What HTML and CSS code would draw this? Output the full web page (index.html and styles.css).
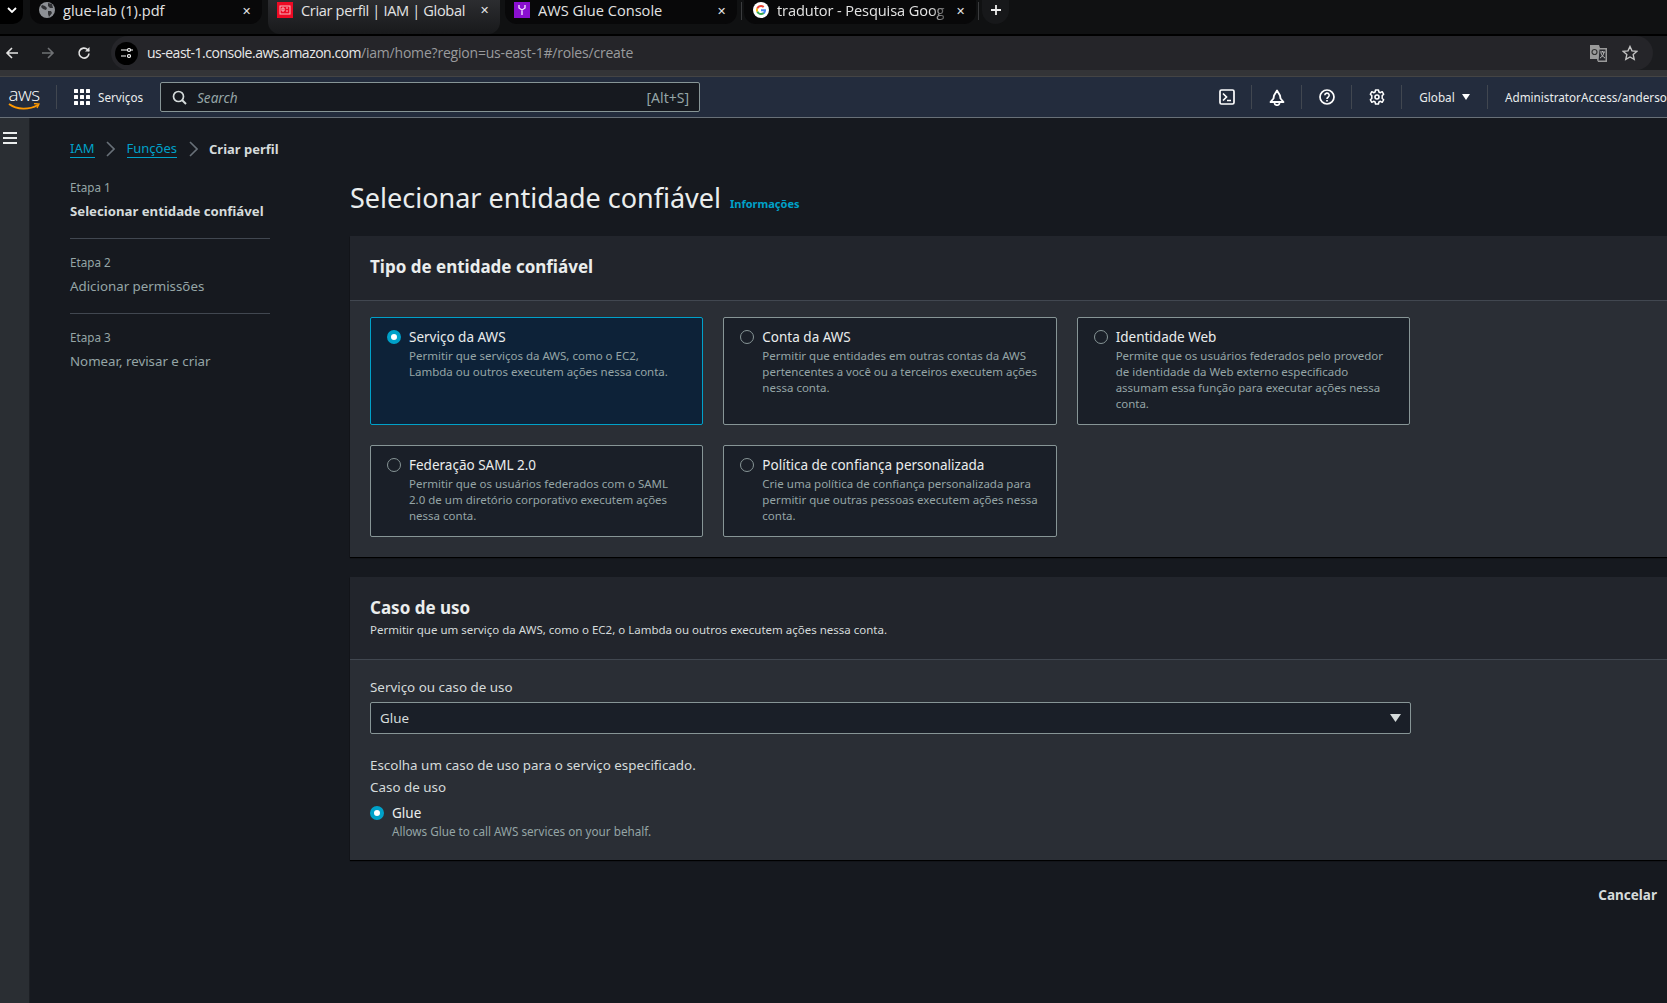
FILE: index.html
```html
<!DOCTYPE html>
<html lang="pt">
  <head>
    <meta charset="UTF-8" />
    <meta name="viewport" content="width=device-width, initial-scale=1.0" />
    <title>Criar perfil | IAM | Global</title>
    <link rel="stylesheet" href="styles.css">
  </head>
  <body>
    <!-- browser tabs -->
    <div class="tabstrip">
      <div class="tab-menu">
        <svg width="10" height="6" viewBox="0 0 10 6"><path d="M1 1l4 4 4-4" fill="none" stroke="#fff" stroke-width="1.8"/></svg>
      </div>
      <div class="tab">
        <svg class="favicon" width="16" height="16" viewBox="0 0 16 16"><circle cx="8" cy="8" r="8" fill="#8d9095"/><path d="M3 3l3 1 2 2-1 2-3-1-2-2zM9 9l3 0 1 2-3 4-1-3zM9 1l4 1 1 4-3 0-2-2z" fill="#303134"/></svg>
        <span class="tab-name">glue-lab (1).pdf</span>
        <span class="tab-close">✕</span>
      </div>
      <div class="tab tab-active">
        <svg class="favicon" width="16" height="16" viewBox="0 0 16 16"><rect width="16" height="16" fill="#ee0a24"/><rect x="3" y="4" width="10" height="8" fill="none" stroke="#f9b8be"/><path d="M5 6h2v3H5zM9 6h2M9 9h2" fill="none" stroke="#f9b8be"/></svg>
        <span class="tab-name">Criar perfil | IAM | Global</span>
        <span class="tab-close">✕</span>
      </div>
      <div class="tab tab-third">
        <svg class="favicon" width="16" height="16" viewBox="0 0 16 16"><rect width="16" height="16" fill="#8a0fd0"/><path d="M5 3v3l3 2 3-2V3M8 8v5" fill="none" stroke="#f0dcff" stroke-width="1.4"/></svg>
        <span class="tab-name">AWS Glue Console</span>
        <span class="tab-close">✕</span>
      </div>
      <div class="tab-sep"></div>
      <div class="tab tab-google">
        <svg class="favicon" width="16" height="16" viewBox="0 0 16 16">
          <circle cx="8" cy="8" r="8" fill="#fff"/>
          <path d="M13 8.2c0-.4 0-.7-.1-1H8v2h2.8c-.1.6-.5 1.2-1 1.500l1.600 1.200c1-.9 1.600-2.200 1.600-3.700z" fill="#4285f4"/>
          <path d="M8 13c1.400 0 2.500-.5 3.400-1.300l-1.600-1.200c-.5.300-1.100.5-1.800.5-1.300 0-2.500-.9-2.900-2.100L3.400 10.100C4.200 11.800 6 13 8 13z" fill="#34a853"/>
          <path d="M5.100 8.900C5 8.600 4.900 8.300 4.900 8s.1-.6.2-.9L3.400 5.900C3.100 6.500 3 7.300 3 8s.1 1.500.4 2.100z" fill="#fbbc05"/>
          <path d="M8 5c.8 0 1.400.3 2 .8l1.400-1.400C10.500 3.500 9.400 3 8 3 6 3 4.200 4.200 3.400 5.900l1.700 1.200C5.500 5.900 6.700 5 8 5z" fill="#ea4335"/>
        </svg>
        <span class="tab-name tab-fade">tradutor - Pesquisa Goog</span>
        <span class="tab-close">✕</span>
      </div>
      <div class="tab-sep"></div>
      <div class="tab-new">
        <svg width="12" height="12" viewBox="0 0 12 12"><path d="M6 1v10M1 6h10" stroke="#eee" stroke-width="1.800"/></svg>
      </div>
    </div>

    <!-- address bar -->
    <div class="toolbar">
      <svg class="tool-btn" width="14" height="14" viewBox="0 0 14 14"><path d="M13 7H2M7 2L2 7l5 5" fill="none" stroke="#e3e3e3" stroke-width="1.600"/></svg>
      <svg class="tool-btn" width="14" height="14" viewBox="0 0 14 14"><path d="M1 7h11M7 2l5 5-5 5" fill="none" stroke="#6f7174" stroke-width="1.600"/></svg>
      <svg class="tool-btn" width="14" height="14" viewBox="0 0 14 14"><path d="M12 7.500A5 5 0 1 1 10.500 3.500L12 5" fill="none" stroke="#e3e3e3" stroke-width="1.600"/><path d="M12.500 1v4.500H8z" fill="#e3e3e3"/></svg>
      <div class="urlbar">
        <div class="site-icon">
          <svg width="12" height="12" viewBox="0 0 12 12"><path d="M0 3h6M0 9h5M10 3h2" stroke="#fff" stroke-width="1.200"/><circle cx="8" cy="3" r="1.500" fill="none" stroke="#fff" stroke-width="1.200"/><circle cx="8" cy="9" r="1.500" fill="none" stroke="#fff" stroke-width="1.200"/></svg>
        </div>
        <span class="url"><span class="url-host">us-east-1.console.aws.amazon.com</span>/iam/home?region=us-east-1#/roles/create</span>
        <svg class="url-translate" width="17" height="17" viewBox="0 0 17 17"><path d="M0 0h9l1 3h7v14H8l-1-3H0z" fill="#9a9a9a"/><path d="M9 4h7v12H8z" fill="#2a2b30" stroke="#9a9a9a"/><circle cx="4.500" cy="7" r="2.500" fill="none" stroke="#333" stroke-width="1.200"/><path d="M10 7h5M12.500 6v1M14 7c-.5 3-2 5-4 6M11 8c.5 2 2 4 4 5" fill="none" stroke="#bbb"/></svg>
        <svg class="url-star" width="16" height="16" viewBox="0 0 16 16"><path d="M8 1.500l2 4.400 4.800.5-3.600 3.200 1 4.700L8 12l-4.200 2.300 1-4.700L1.200 6.400 6 5.900z" fill="none" stroke="#c4c4c4" stroke-width="1.400"/></svg>
      </div>
    </div>
    <div class="toolbar-edge"></div>

    <!-- aws console nav -->
    <nav class="awsnav">
      <div class="aws-logo">
        <span class="aws-word">aws</span>
        <svg width="32" height="8" viewBox="0 0 32 8"><path d="M1 1c8 6 20 6 29 1" fill="none" stroke="#ff9900" stroke-width="1.800"/><path d="M26 0.500l5 .5-2 4" fill="none" stroke="#ff9900" stroke-width="1.300"/></svg>
      </div>
      <div class="nav-sep nav-sep-first"></div>
      <div class="services">
        <div class="grid-icon"><i></i><i></i><i></i><i></i><i></i><i></i><i></i><i></i><i></i></div>
        <span>Serviços</span>
      </div>
      <div class="search">
        <svg width="15" height="15" viewBox="0 0 15 15"><circle cx="6.500" cy="6.500" r="5" fill="none" stroke="#d5dbdb" stroke-width="1.700"/><path d="M10 10l4 4" stroke="#d5dbdb" stroke-width="1.900"/></svg>
        <span class="search-text">Search</span>
        <span class="search-key">[Alt+S]</span>
      </div>
      <div class="nav-right">
        <div class="nav-item nav-icon">
          <svg width="16" height="16" viewBox="0 0 16 16"><rect x="1" y="1" width="14" height="14" rx="1.500" fill="none" stroke="#fff" stroke-width="1.700"/><path d="M4 4.500L7.500 8 4 11.500M8 11.500h4" fill="none" stroke="#fff" stroke-width="1.700"/></svg>
        </div>
        <div class="nav-sep"></div>
        <div class="nav-item nav-icon">
          <svg width="16" height="17" viewBox="0 0 16 17"><path d="M8 1.500L5 6.500 4.500 9.500 1.500 13h13l-3-3.500L11 6.500z" fill="none" stroke="#fff" stroke-width="1.800" stroke-linejoin="round"/><path d="M5.500 14a2.500 2.200 0 0 0 5 0" fill="none" stroke="#fff" stroke-width="1.700"/></svg>
        </div>
        <div class="nav-sep"></div>
        <div class="nav-item nav-icon">
          <svg width="16" height="16" viewBox="0 0 16 16"><circle cx="8" cy="8" r="7" fill="none" stroke="#fff" stroke-width="1.700"/><path d="M5.800 6.300a2.200 2.200 0 1 1 3.300 1.900C8.400 8.600 8 9 8 10" fill="none" stroke="#fff" stroke-width="1.600"/><path d="M8 11v1.600" stroke="#fff" stroke-width="1.700"/></svg>
        </div>
        <div class="nav-sep"></div>
        <div class="nav-item nav-icon">
          <svg width="16" height="16" viewBox="0 0 16 16"><path d="M6.500 1h3l.4 2 1.500.7 1.800-1 1.500 2.600-1.500 1.300v2.800l1.500 1.300-1.500 2.600-1.800-1-1.500.7-.4 2h-3l-.4-2-1.500-.7-1.800 1-1.500-2.600 1.500-1.300V6.600L1.300 5.300l1.500-2.600 1.800 1 1.500-.7z" fill="none" stroke="#fff" stroke-width="1.500" stroke-linejoin="round"/><circle cx="8" cy="8" r="2" fill="none" stroke="#fff" stroke-width="1.600"/></svg>
        </div>
        <div class="nav-sep"></div>
        <div class="nav-item nav-region">
          <span>Global</span>
          <svg width="8" height="6" viewBox="0 0 8 6"><path d="M0 0h8L4 6z" fill="#fff"/></svg>
        </div>
        <div class="nav-sep"></div>
        <div class="nav-item nav-user">AdministratorAccess/anderson</div>
      </div>
    </nav>

    <div class="page">
      <aside class="rail">
        <div class="burger"><i></i><i></i><i></i></div>
      </aside>

      <div class="wizard">
        <div class="breadcrumbs">
          <a class="link">IAM</a>
          <svg width="9" height="16" viewBox="0 0 9 16"><path d="M1 1l7 7-7 7" fill="none" stroke="#687078" stroke-width="1.600"/></svg>
          <a class="link">Funções</a>
          <svg width="9" height="16" viewBox="0 0 9 16"><path d="M1 1l7 7-7 7" fill="none" stroke="#687078" stroke-width="1.600"/></svg>
          <span class="crumb-now">Criar perfil</span>
        </div>

        <div class="wizard-body">
          <ul class="steps">
            <li class="step">
              <div class="step-num">Etapa 1</div>
              <div class="step-name step-current">Selecionar entidade confiável</div>
            </li>
            <li class="step">
              <div class="step-num">Etapa 2</div>
              <div class="step-name">Adicionar permissões</div>
            </li>
            <li class="step">
              <div class="step-num">Etapa 3</div>
              <div class="step-name">Nomear, revisar e criar</div>
            </li>
          </ul>

          <main class="content">
            <div class="page-head">
              <h1>Selecionar entidade confiável</h1>
              <a class="info">Informações</a>
            </div>

            <section class="panel">
              <div class="panel-head panel-head-type">
                <h2>Tipo de entidade confiável</h2>
              </div>
              <div class="panel-body panel-body-type">
                <div class="tiles">
                  <div class="tile tile-on">
                    <span class="radio radio-on"></span>
                    <div>
                      <div class="tile-title">Serviço da AWS</div>
                      <div class="tile-desc">Permitir que serviços da AWS, como o EC2, Lambda ou outros executem ações nessa conta.</div>
                    </div>
                  </div>
                  <div class="tile">
                    <span class="radio"></span>
                    <div>
                      <div class="tile-title">Conta da AWS</div>
                      <div class="tile-desc">Permitir que entidades em outras contas da AWS pertencentes a você ou a terceiros executem ações nessa conta.</div>
                    </div>
                  </div>
                  <div class="tile">
                    <span class="radio"></span>
                    <div>
                      <div class="tile-title">Identidade Web</div>
                      <div class="tile-desc">Permite que os usuários federados pelo provedor de identidade da Web externo especificado assumam essa função para executar ações nessa conta.</div>
                    </div>
                  </div>
                  <div class="tile">
                    <span class="radio"></span>
                    <div>
                      <div class="tile-title">Federação SAML 2.0</div>
                      <div class="tile-desc">Permitir que os usuários federados com o SAML 2.0 de um diretório corporativo executem ações nessa conta.</div>
                    </div>
                  </div>
                  <div class="tile">
                    <span class="radio"></span>
                    <div>
                      <div class="tile-title">Política de confiança personalizada</div>
                      <div class="tile-desc">Crie uma política de confiança personalizada para permitir que outras pessoas executem ações nessa conta.</div>
                    </div>
                  </div>
                </div>
              </div>
            </section>

            <section class="panel panel-usecase">
              <div class="panel-head panel-head-use">
                <h2>Caso de uso</h2>
                <p>Permitir que um serviço da AWS, como o EC2, o Lambda ou outros executem ações nessa conta.</p>
              </div>
              <div class="panel-body panel-body-use">
                <div class="field-label">Serviço ou caso de uso</div>
                <div class="select">
                  <span>Glue</span>
                  <svg width="11" height="8" viewBox="0 0 11 8"><path d="M0 0h11L5.500 8z" fill="#d5dbdb"/></svg>
                </div>
                <div class="choose">Escolha um caso de uso para o serviço especificado.</div>
                <div class="field-label field-label-use">Caso de uso</div>
                <div class="use-option">
                  <span class="radio radio-on"></span>
                  <div>
                    <div class="tile-title">Glue</div>
                    <div class="use-desc">Allows Glue to call AWS services on your behalf.</div>
                  </div>
                </div>
              </div>
            </section>

            <div class="actions">
              <span class="cancel">Cancelar</span>
            </div>
          </main>
        </div>
      </div>
    </div>
  </body>
</html>
```

FILE: styles.css
```css
* {
  box-sizing: border-box;
}

html, body {
  height: 100%;
}

body {
  margin: 0;
  background: #16191f;
  color: #d5dbdb;
  font-family: "Noto Sans", Arial, sans-serif;
  overflow: hidden;
  width: 1667px;
  height: 1003px;
}

/* ---------- browser tabs ---------- */
.tabstrip {
  display: flex;
  align-items: flex-start;
  height: 36px;
  background: #101112;
  border-bottom: 2px solid #000;
  font-family: "Open Sans", "Noto Sans", sans-serif;
  white-space: nowrap;
}

.tab-menu {
  width: 23px;
  height: 24px;
  background: #000;
  border-radius: 0 0 10px 0;
  display: flex;
  align-items: center;
  justify-content: center;
  margin-right: 7px;
  padding-bottom: 4px;
}

.tab {
  width: 232px;
  height: 24px;
  background: #080809;
  border-radius: 0 0 12px 12px;
  display: flex;
  align-items: center;
  padding: 0 8px 4px 9px;
  margin-right: 6px;
  color: #e3e3e3;
  font-size: 14.6px;
}

.tab-active {
  height: 34px;
  align-items: flex-start;
  background: linear-gradient(to bottom, #2c2d30, #18191b);
  margin-right: 5px;
  line-height: 20px;
  letter-spacing: -0.35px;
}

.tab-third {
  margin-right: 4px;
}

.tab-google {
  margin-right: 2px;
  letter-spacing: -0.1px;
}

.favicon {
  margin-right: 8px;
  flex: none;
}

.tab-active .favicon {
  margin-top: 2px;
}

.tab-name {
  flex: 1;
  overflow: hidden;
}

.tab-fade {
  -webkit-mask-image: linear-gradient(to right, #000 88%, transparent);
  mask-image: linear-gradient(to right, #000 88%, transparent);
  padding-right: 6px;
}

.tab-close {
  width: 16px;
  text-align: center;
  font-size: 11px;
  color: #e3e3e3;
  flex: none;
}

.tab-sep {
  width: 1px;
  height: 18px;
  margin-top: 2px;
  background: #3a3b3d;
  margin-right: 2px;
}

.tab-new {
  width: 27px;
  height: 24px;
  background: #17181a;
  border-radius: 0 0 14px 14px;
  display: flex;
  align-items: center;
  justify-content: center;
  margin-left: 1px;
  padding-bottom: 4px;
}

/* ---------- address bar ---------- */
.toolbar {
  display: flex;
  align-items: center;
  height: 34px;
  background: #1b1c1f;
  padding-left: 5px;
}

.tool-btn {
  margin: 0 11px 0 0;
  flex: none;
}

.tool-btn + .tool-btn {
  margin-left: 11px;
}

.urlbar {
  display: flex;
  align-items: center;
  width: 1542px;
  height: 34px;
  margin-left: 9px;
  background: #252529;
  border-radius: 17px;
  padding-left: 4px;
}

.site-icon {
  width: 23px;
  height: 23px;
  border-radius: 50%;
  background: #000;
  display: flex;
  align-items: center;
  justify-content: center;
  margin-right: 9px;
}

.url {
  font-size: 14px;
  color: #9a9b9d;
  font-family: "Open Sans", sans-serif;
  letter-spacing: -0.2px;
  flex: 1;
  padding-bottom: 2px;
}

.url-host {
  color: #e8e8e8;
  letter-spacing: -0.5px;
}

.url-translate {
  margin-right: 15px;
}

.url-star {
  margin-right: 15px;
}

.toolbar-edge {
  height: 7px;
  background: #333437;
  border-bottom: 1px solid #444;
}

/* ---------- console nav ---------- */
.awsnav {
  display: flex;
  align-items: center;
  height: 41px;
  background: #232c3d;
  border-bottom: 1px solid #687078;
  font-size: 11.7px;
  color: #eaeded;
  padding-left: 8px;
  white-space: nowrap;
}

.aws-logo {
  width: 32px;
  height: 28px;
  flex: none;
  display: flex;
  flex-direction: column;
  align-items: center;
  margin-top: 3px;
  line-height: 15px;
}

.aws-word {
  font-family: "Open Sans", sans-serif;
  font-weight: 300;
  font-size: 19px;
  color: #fff;
  line-height: 18px;
  letter-spacing: -0.5px;
}

.nav-sep {
  width: 1px;
  height: 24px;
  background: #414750;
  flex: none;
}

.nav-sep-first {
  margin-left: 16px;
}

.services {
  display: flex;
  align-items: center;
  gap: 8px;
  margin-left: 17px;
  width: 86px;
  flex: none;
}

.grid-icon {
  display: grid;
  grid-template-columns: repeat(3, 4px);
  grid-auto-rows: 4px;
  gap: 2px;
}

.grid-icon i {
  background: #fff;
  border-radius: 0.5px;
}

.search {
  display: flex;
  align-items: center;
  width: 540px;
  flex: none;
  height: 30px;
  background: #16191f;
  border: 1px solid #879596;
  border-radius: 2px;
  padding: 0 10px 0 11px;
}

.search-text {
  flex: 1;
  margin-left: 10px;
  font-style: italic;
  font-size: 13.6px;
  color: #95a5a6;
}

.search-key {
  font-size: 14px;
  color: #95a5a6;
}

.nav-right {
  display: flex;
  align-items: center;
  margin-left: 502px;
}

.nav-item {
  display: flex;
  align-items: center;
  justify-content: center;
  height: 24px;
}

.nav-icon {
  width: 49px;
}

.nav-region {
  gap: 7px;
  width: 85px;
}

.nav-user {
  padding-left: 17px;
}

/* ---------- page layout ---------- */
.page {
  display: flex;
  height: 885px;
}

.rail {
  width: 30px;
  flex: none;
  background: #2a2e33;
  border-right: 1px solid #1c1f24;
  padding: 14px 3px;
}

.burger {
  display: flex;
  flex-direction: column;
  gap: 3px;
}

.burger i {
  width: 14px;
  height: 2px;
  background: #eaeded;
}

.wizard {
  flex: 1;
  min-width: 0;
  padding-left: 40px;
}

.breadcrumbs {
  display: flex;
  align-items: center;
  height: 24px;
  margin-top: 19px;
  margin-bottom: 3px;
  font-size: 13px;
  gap: 11.5px;
}

.link {
  color: #00a1c9;
  border-bottom: 1px solid #00a1c9;
  line-height: 17px;
}

.crumb-now {
  font-weight: 700;
  color: #d5dbdb;
}

.wizard-body {
  display: flex;
}

/* ---------- steps ---------- */
.steps {
  list-style: none;
  margin: 0 80px 0 0;
  padding: 0;
  width: 200px;
  flex: none;
}

.step {
  height: 75px;
  padding-top: 15px;
  border-bottom: 1px solid #414750;
}

.step:last-child {
  border-bottom: none;
}

.step-num {
  font-size: 11.7px;
  line-height: 16px;
  color: #95a5a6;
}

.step-name {
  font-size: 13.3px;
  line-height: 18px;
  margin-top: 7px;
  color: #95a5a6;
}

.step-current {
  font-weight: 700;
  color: #d5dbdb;
  font-size: 13.2px;
}

/* ---------- content ---------- */
.content {
  flex: 1;
  min-width: 0;
}

.page-head {
  display: flex;
  align-items: baseline;
  gap: 9px;
  height: 72px;
  padding-top: 15px;
}

h1 {
  margin: 0;
  font-size: 27px;
  font-weight: 400;
  line-height: 38px;
  color: #eaeded;
}

.info {
  font-size: 11px;
  font-weight: 700;
  color: #00a1c9;
}

.panel {
  background: #2a2e35;
  box-shadow: 0 1px 1px #000;
}

.panel-usecase {
  margin-top: 20px;
}

.panel-head {
  background: #22252c;
  border-bottom: 1px solid #414750;
  padding-left: 20px;
}

.panel-head-type {
  height: 65px;
  padding-top: 19px;
}

.panel-head-use {
  height: 83px;
  padding-top: 19px;
}

h2 {
  margin: 0;
  font-size: 17px;
  line-height: 24px;
  font-weight: 700;
  color: #eaeded;
}

.panel-head p {
  margin: 2px 0 0;
  font-size: 11.5px;
  line-height: 16px;
  color: #d5dbdb;
}

.panel-body {
  padding-left: 20px;
}

.panel-body-type {
  padding-top: 16px;
  padding-bottom: 20px;
}

.tiles {
  display: grid;
  grid-template-columns: repeat(3, 1fr);
  gap: 20px;
  width: 1040px;
}

.tile {
  display: flex;
  align-items: flex-start;
  gap: 8px;
  background: #1a1f28;
  border: 1px solid #879596;
  border-radius: 2px;
  padding: 9px 17px 12px 16px;
}

.tile-on {
  background: #0d2238;
  border-color: #00a1c9;
}

.radio {
  width: 14px;
  height: 14px;
  margin-top: 3px;
  border-radius: 50%;
  border: 1px solid #879596;
  flex: none;
}

.radio-on {
  border: 4.5px solid #00a1c9;
  background: #fff;
}

.tile-title {
  font-size: 13.5px;
  line-height: 20px;
  color: #eaeded;
}

.tile-desc {
  margin-top: 1px;
  font-size: 11.5px;
  line-height: 16px;
  color: #95a5a6;
}

.use-desc {
  font-size: 11.7px;
  line-height: 16px;
  color: #95a5a6;
}

.panel-body-use {
  height: 200px;
  padding-top: 17px;
}

.field-label {
  font-size: 13.4px;
  line-height: 20px;
  color: #d5dbdb;
}

.select {
  display: flex;
  align-items: center;
  justify-content: space-between;
  width: 1041px;
  height: 32px;
  margin-top: 5px;
  background: #1a1f28;
  border: 1px solid #879596;
  border-radius: 2px;
  padding: 0 9px;
  font-size: 13.4px;
  color: #d5dbdb;
}

.choose {
  margin-top: 21px;
  font-size: 13.4px;
  line-height: 20px;
  color: #d5dbdb;
}

.field-label-use {
  margin-top: 2px;
}

.use-option {
  display: flex;
  align-items: flex-start;
  gap: 8px;
  margin-top: 6px;
}

.actions {
  display: flex;
  justify-content: flex-end;
  padding: 26px 10px 0 0;
}

.cancel {
  font-size: 13.5px;
  font-weight: 700;
  color: #d5dbdb;
}
```
